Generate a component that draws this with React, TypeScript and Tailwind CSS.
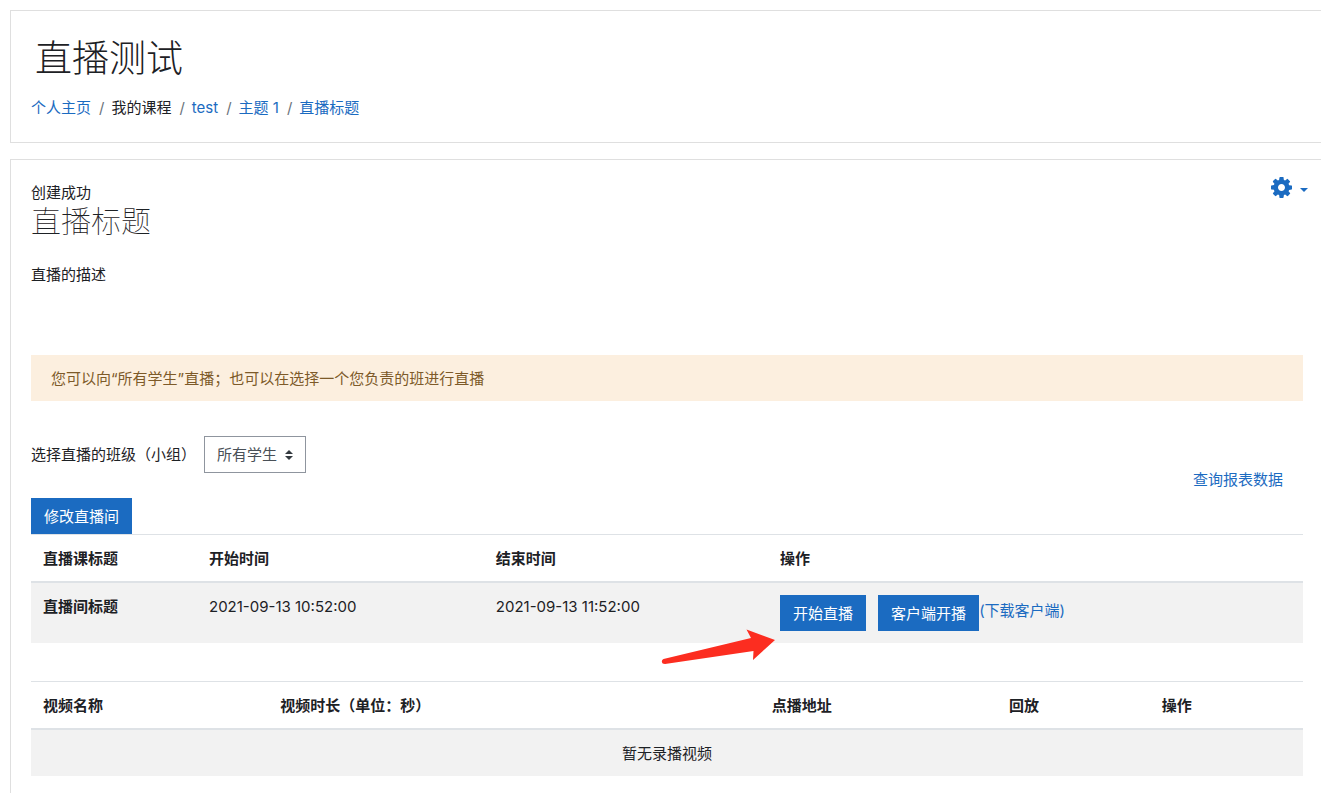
import { useState } from 'react';
import type { ReactNode } from 'react';

// ─── Data ────────────────────────────────────────────────────────────────────

const CRUMBS = [
  { label: '个人主页', href: '#home' },
  { label: '我的课程' },
  { label: 'test', href: '#course' },
  { label: '主题 1', href: '#section-1' },
  { label: '直播标题', href: '#live' },
];

const LIVE_COLUMNS = [
  { label: '直播课标题', width: 'w-[13.05%]' },
  { label: '开始时间', width: 'w-[22.55%]' },
  { label: '结束时间', width: 'w-[22.35%]' },
  { label: '操作', width: '' },
];

const VIDEO_COLUMNS = [
  { label: '视频名称', width: 'w-[18.65%]' },
  { label: '视频时长（单位：秒）', width: 'w-[38.65%]' },
  { label: '点播地址', width: 'w-[18.65%]' },
  { label: '回放', width: 'w-[12%]' },
  { label: '操作', width: '' },
];

// ─── Icons ───────────────────────────────────────────────────────────────────

function CogIcon() {
  return (
    <svg className="w-[21px] h-[21px]" viewBox="0 -128 1536 1536" fill="currentColor" aria-hidden="true">
      <path d="M1024 640q0-106-75-181t-181-75-181 75-75 181 75 181 181 75 181-75 75-181zM1536 531v222q0 12-8 23t-20 13l-185 28q-19 54-39 91 35 50 107 138 10 12 10 25t-9 23q-27 37-99 108t-94 71q-12 0-26-9l-138-108q-44 23-91 38-16 136-29 186-7 28-36 28h-222q-14 0-24.5-8.5t-11.5-21.5l-28-184q-49-16-90-37l-141 107q-10 9-25 9-14 0-25-11-126-114-165-168-7-10-7-23 0-12 8-23 15-21 51-66.5t54-70.5q-27-50-41-99l-183-27q-13-2-21-12.5t-8-23.5v-222q0-12 8-23t19-13l186-28q14-46 39-92-40-57-107-138-10-12-10-24 0-10 9-23 26-36 98.5-107.5t94.5-71.5q13 0 26 10l138 107q44-23 91-38 16-136 29-186 7-28 36-28h222q14 0 24.5 8.5t11.5 21.5l28 184q49 16 90 37l142-107q9-9 24-9 13 0 25 10 129 119 165 170 7 8 7 22 0 12-8 23-15 21-51 66.5t-54 70.5q26 50 41 98l183 28q13 2 21 12.5t8 23.5z" />
    </svg>
  );
}

function PointerArrow() {
  return (
    <svg
      className="absolute right-full top-[34px] mr-1 w-[115px] h-[36px] max-w-none pointer-events-none"
      viewBox="0 0 115 36"
      fill="#fc2d20"
      aria-hidden="true"
    >
      <path d="M2.500 30 L90 9 L85.500 0.500 L114 11 L92 31 L92.500 22 L4 35 Q1 35 0.800 32.500 Q0.800 30.500 2.500 30 Z" />
    </svg>
  );
}

// ─── Building blocks ─────────────────────────────────────────────────────────

function PrimaryButton({ children }: { children: ReactNode }) {
  return (
    <button type="button" className="h-9 px-[13px] pt-0.5 bg-[#1b6bc1] hover:bg-[#1659a0] text-white cursor-pointer">
      {children}
    </button>
  );
}

function TableHead({ columns }: { columns: { label: string; width: string }[] }) {
  return (
    <thead>
      <tr>
        {columns.map((c, i) => (
          <th
            key={i}
            scope="col"
            className={`${c.width} px-3 pt-[13px] pb-[11px] text-left font-bold border-t border-b-2 border-t-[#dee2e6] border-b-[#dee2e6]`}
          >
            {c.label}
          </th>
        ))}
      </tr>
    </thead>
  );
}

// ─── Page ────────────────────────────────────────────────────────────────────

export default function App() {
  const [group, setGroup] = useState('all');

  return (
    <div className="min-h-screen flex flex-col gap-4 pt-[10px] pl-[10px] bg-white text-[#1d2125] text-[15px] leading-[22px] font-['Inter','Noto_Sans_CJK_SC',sans-serif]">
      <header className="border-y border-l border-[#dfdfdf] pl-5 pr-[18px] pt-[21px] pb-[23px]">
        <h1 className="pl-1 text-[37px] leading-[54px] font-extralight">直播测试</h1>
        <nav aria-label="导航" className="mt-[11px]">
          <ol className="flex gap-2">
            {CRUMBS.map((c, i) => (
              <li key={c.label} className="flex gap-[7px]">
                {i > 0 && <span className="text-[#6a737b]">/</span>}
                {c.href ? <a href={c.href} className="text-[#1b6bc1] hover:underline">{c.label}</a> : c.label}
              </li>
            ))}
          </ol>
        </nav>
      </header>

      <main className="flex-1 border-t border-l border-[#dfdfdf] pl-5 pr-[18px] pt-[22px] pb-4">
        <div className="flex items-start justify-between">
          <div>
            <p>创建成功</p>
            <h2 className="text-[30px] leading-[34px] font-thin">直播标题</h2>
          </div>
          <button
            type="button"
            aria-label="操作菜单"
            className="flex items-center gap-2 -mt-[5px] -mr-[5px] text-[#1b6bc1] cursor-pointer"
          >
            <CogIcon />
            <svg className="w-2 h-1 mt-1" viewBox="0 0 8 4" fill="currentColor" aria-hidden="true">
              <path d="M0 0h8L4 4z" />
            </svg>
          </button>
        </div>

        <p className="mt-[26px]">直播的描述</p>

        <div role="alert" className="mt-[69px] px-5 pt-[13px] pb-[11px] bg-[#fcefdf] text-[#7d5a29]">
          您可以向“所有学生”直播；也可以在选择一个您负责的班进行直播
        </div>

        <div className="flex items-start justify-between mt-[35px]">
          <div className="flex flex-col items-start gap-[25px]">
            <div className="flex items-center">
              <label htmlFor="group" className="mr-2">选择直播的班级（小组）</label>
              <div className="relative">
                <select
                  id="group"
                  value={group}
                  onChange={(e) => setGroup(e.target.value)}
                  className="appearance-none w-[102px] h-[37px] pl-3 border border-[#8f959e] bg-white text-[#495057]"
                >
                  <option value="all">所有学生</option>
                </select>
                <svg
                  className="absolute right-[13px] top-[14px] w-2 h-[10px] pointer-events-none"
                  viewBox="0 0 8 10"
                  fill="#343a40"
                  aria-hidden="true"
                >
                  <path d="M4 0L0 4h8zM4 10L0 6h8z" />
                </svg>
              </div>
            </div>
            <PrimaryButton>修改直播间</PrimaryButton>
          </div>
          <a href="#report" className="mt-[33px] mr-5 text-[#1b6bc1] hover:underline">查询报表数据</a>
        </div>

        <table className="w-full table-fixed border-separate border-spacing-0">
          <TableHead columns={LIVE_COLUMNS} />
          <tbody>
            <tr className="bg-[#f2f2f2] align-top">
              <th scope="row" className="px-3 pt-[13px] pb-[11px] text-left font-bold">直播间标题</th>
              <td className="px-3 pt-[13px] pb-[11px]">2021-09-13 10:52:00</td>
              <td className="px-3 pt-[13px] pb-[11px]">2021-09-13 11:52:00</td>
              <td className="p-3">
                <div className="relative flex items-start">
                  <div className="flex gap-3">
                    <PrimaryButton>开始直播</PrimaryButton>
                    <PrimaryButton>客户端开播</PrimaryButton>
                  </div>
                  <a href="#download" className="leading-8 text-[#1b6bc1] hover:underline">(下载客户端)</a>
                  <PointerArrow />
                </div>
              </td>
            </tr>
          </tbody>
        </table>

        <table className="w-full table-fixed border-separate border-spacing-0 mt-[38px]">
          <TableHead columns={VIDEO_COLUMNS} />
          <tbody>
            <tr className="bg-[#f2f2f2]">
              <td colSpan={VIDEO_COLUMNS.length} className="px-3 pt-[13px] pb-[11px] text-center">暂无录播视频</td>
            </tr>
          </tbody>
        </table>
      </main>
    </div>
  );
}
